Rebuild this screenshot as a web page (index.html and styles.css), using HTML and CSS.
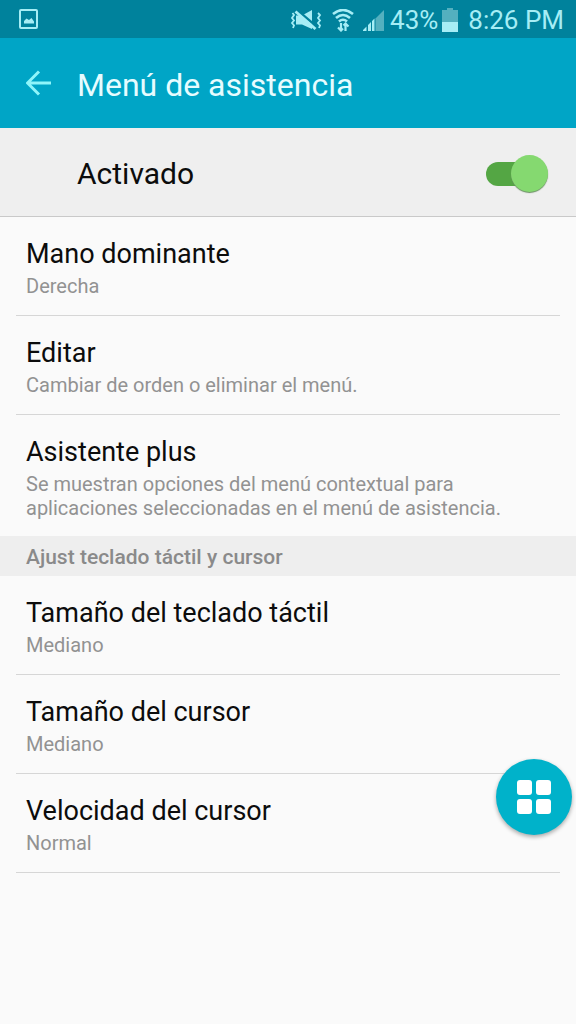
FILE: index.html
```html
<!DOCTYPE html>
<html lang="es">
<head>
<meta charset="utf-8">
<meta name="viewport" content="width=device-width, initial-scale=1">
<title>Menú de asistencia</title>
<link rel="stylesheet" href="styles.css">
</head>
<body>
<div class="status-bar">
  <svg class="status-picture" width="20" height="20" viewBox="0 0 20 20" aria-hidden="true">
    <rect x="1" y="1" width="17" height="18" rx="1" fill="none" stroke="currentColor" stroke-width="2"/>
    <path d="M5 14.500V12L7.500 9.500L10 11L12.500 9L15 12.500V14.500Z" fill="currentColor"/>
  </svg>
  <div class="status-icons">
    <svg class="icon-mute" width="32" height="22" viewBox="0 0 32 22" aria-hidden="true">
      <path d="M6 6.500H12L22 1V20L12 15.500H6Z" fill="currentColor"/>
      <path d="M7 1L27 18" stroke="#00829c" stroke-width="2.500"/>
      <path d="M5.500 2.500L25.500 20" stroke="currentColor" stroke-width="2.800"/>
      <path d="M2.500 4L4 6L2 9L4 11.500L2 14L4 16.500L3 19M28 4L30 6L28 9L30 11.500L28 14L30 16.500L29 19" fill="none" stroke="currentColor" stroke-width="1.800"/>
    </svg>
    <svg class="icon-wifi" width="22" height="23" viewBox="0 0 22 23" aria-hidden="true">
      <path d="M1 5Q11 -3 21 5M4 9Q11 3 18 9M7 12.500Q11 9 15 12.500" fill="none" stroke="currentColor" stroke-width="2.600"/>
      <path d="M9 21V14M6 18.500L9 21.500L11 19.500M13.500 15V22M11.500 16.500L13.500 14.500L16.500 17.500" fill="none" stroke="currentColor" stroke-width="2.200"/>
    </svg>
    <svg class="icon-signal" width="21" height="21" viewBox="0 0 21 21" aria-hidden="true">
      <path d="M12.500 8.500L21 0V21H12.500Z" fill="#54b0bf"/>
      <path d="M0 21V20L3.500 16.500V21ZM5 21V15L8 12V21ZM9 21V11L11.500 8.500V21Z" fill="currentColor"/>
    </svg>
    <span class="percent">43%</span>
    <svg class="icon-battery" width="16" height="24" viewBox="0 0 16 24" aria-hidden="true">
      <path d="M0 2H5V0H11V2H16V24H0Z" fill="#54b0bf"/>
      <path d="M0 14H16V24H0Z" fill="currentColor"/>
    </svg>
    <time class="clock">8:26 PM</time>
  </div>
</div>

<header class="app-bar">
  <button class="back" type="button" aria-label="Atrás">
    <svg width="26" height="26" viewBox="0 0 26 26" fill="none" stroke="currentColor" stroke-width="3" aria-hidden="true">
      <path d="M25 13H2M13 1.500L1.500 13L13 24.500"/>
    </svg>
  </button>
  <h1 class="title">Menú de asistencia</h1>
</header>

<label class="master">
  <span>Activado</span>
  <input class="toggle" type="checkbox" role="switch" checked>
</label>

<main>
  <div class="group">
    <button class="row" type="button"><span class="name">Mano dominante</span><span class="detail">Derecha</span></button>
    <button class="row" type="button"><span class="name">Editar</span><span class="detail">Cambiar de orden o eliminar el menú.</span></button>
    <button class="row row-last" type="button"><span class="name">Asistente plus</span><span class="detail">Se muestran opciones del menú contextual para aplicaciones seleccionadas en el menú de asistencia.</span></button>
  </div>
  <h2 class="section">Ajust teclado táctil y cursor</h2>
  <div class="group">
    <button class="row" type="button"><span class="name">Tamaño del teclado táctil</span><span class="detail">Mediano</span></button>
    <button class="row" type="button"><span class="name">Tamaño del cursor</span><span class="detail">Mediano</span></button>
    <button class="row" type="button"><span class="name">Velocidad del cursor</span><span class="detail">Normal</span></button>
  </div>
</main>

<button class="fab" type="button" aria-label="Menú de asistencia">
  <svg width="34" height="34" viewBox="0 0 34 34" fill="#fff" aria-hidden="true">
    <rect width="15" height="15" rx="3"/><rect x="19" width="15" height="15" rx="3"/>
    <rect y="19" width="15" height="15" rx="3"/><rect x="19" y="19" width="15" height="15" rx="3"/>
  </svg>
</button>
</body>
</html>
```
FILE: styles.css
```css
* { box-sizing: border-box; }
body {
  margin: 0;
  min-height: 100vh;
  background: #fafafa;
  color: #0c0c0c;
  font-family: Roboto, "Noto Sans", sans-serif;
}
button { border: 0; background: none; font: inherit; color: inherit; }
svg { display: block; flex: none; }

.status-bar {
  display: flex;
  align-items: center;
  justify-content: space-between;
  height: 38px;
  padding: 0 12px 0 19px;
  background: #00829c;
  color: #a6edf5;
}
.status-icons { display: flex; align-items: center; padding-top: 2px; }
.icon-wifi { margin-left: 10px; }
.icon-signal { margin-left: 9px; }
.percent { margin-left: 6px; font-size: 26px; line-height: 36px; }
.icon-battery { margin-left: 4px; }
.clock { margin-left: 10px; font-size: 26px; line-height: 36px; }

.app-bar {
  display: flex;
  align-items: center;
  height: 90px;
  padding: 0 26px;
  background: #00a5c6;
}
.back { padding: 0; margin-right: 25px; color: #8ff5fa; }
.title { margin: 0; padding-top: 4px; font-size: 32px; line-height: 40px; font-weight: 400; color: #e6fcff; }

.master {
  display: flex;
  align-items: center;
  justify-content: space-between;
  height: 89px;
  padding: 3px 28px 0 77px;
  background: #efefef;
  border-bottom: 1px solid #c9c9c9;
  font-size: 30px;
}
.toggle {
  appearance: none;
  display: grid;
  align-items: center;
  width: 62px;
  height: 38px;
  margin: 0;
}
.toggle::before,
.toggle::after { content: ""; grid-area: 1 / 1; }
.toggle::before {
  width: 50px;
  height: 24px;
  border-radius: 12px;
  background: #54a644;
}
.toggle::after {
  justify-self: start;
  width: 37px;
  height: 37px;
  border-radius: 50%;
  background: #85d970;
  box-shadow: 0 1px 1px #6a8f62;
}
.toggle:checked::after { justify-self: end; }

.group { padding: 0 16px; }
.row {
  display: block;
  width: 100%;
  padding: 19px 10px 17px;
  border-bottom: 1px solid #d6d6d6;
  text-align: left;
}
.row-last { padding-bottom: 16px; border-bottom: 0; }
.name { display: block; font-size: 27px; line-height: 36px; }
.detail { display: block; max-width: 480px; margin-top: 2px; font-size: 20px; line-height: 24px; color: #929292; }
.section {
  margin: 0;
  padding: 2px 26px 0;
  background: #eee;
  font-size: 21px;
  line-height: 38px;
  font-weight: 500;
  color: #8a8a8a;
}

.fab {
  position: fixed;
  right: 4px;
  top: 759px;
  display: grid;
  place-items: center;
  width: 76px;
  height: 76px;
  padding: 0;
  border-radius: 50%;
  background: #00b2ca;
  box-shadow: 0 2px 4px #0005;
}
```
